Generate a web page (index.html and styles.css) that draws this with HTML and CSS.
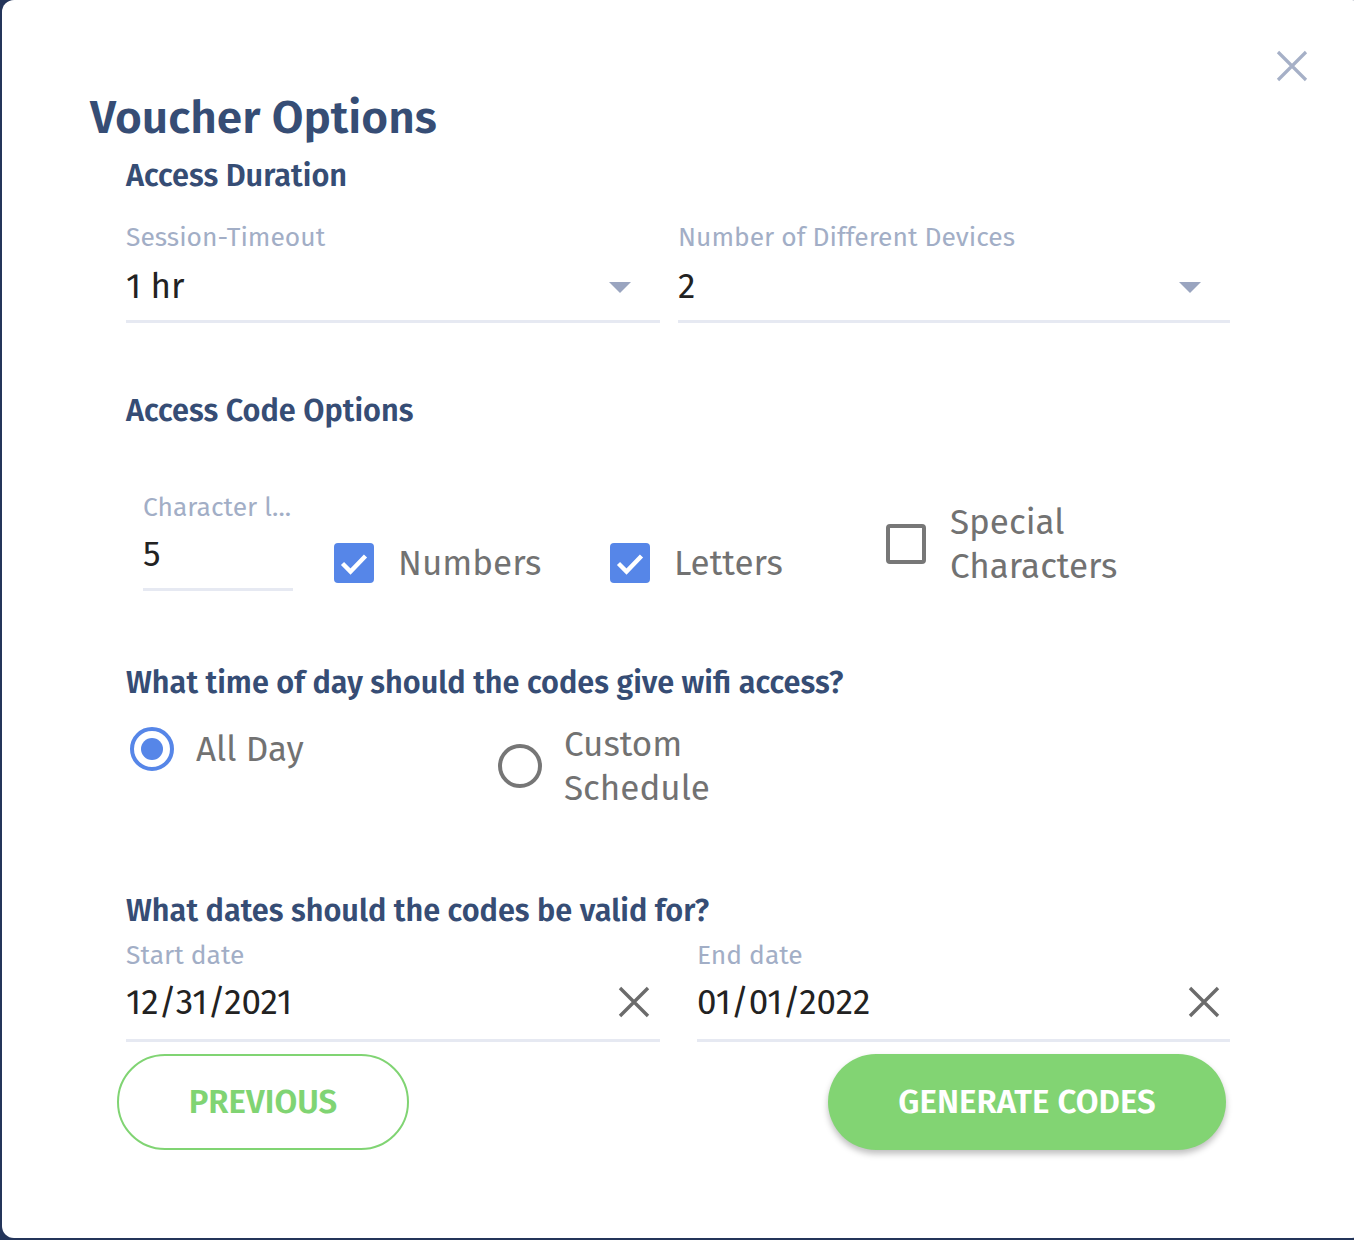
FILE: index.html
```html
<!DOCTYPE html>
<html>
<head>
<meta charset="utf-8">
<link rel="stylesheet" href="styles.css">
</head>
<body>
<div class="modal">
  <button class="close" aria-label="Close">
    <svg width="32" height="32" viewBox="0 0 32 32"><path d="M2 2 L30 30 M30 2 L2 30" stroke="#a6b0c7" stroke-width="3.2" fill="none"/></svg>
  </button>
  <h1 class="title">Voucher Options</h1>
  <div class="content">
    <h2 class="heading h-duration">Access Duration</h2>
    <div class="row-duration">
      <div class="field">
        <div class="label">Session-Timeout</div>
        <div class="value-row">
          <span class="value">1 hr</span>
          <span class="caret"></span>
        </div>
      </div>
      <div class="field">
        <div class="label">Number of Different Devices</div>
        <div class="value-row">
          <span class="value">2</span>
          <span class="caret"></span>
        </div>
      </div>
    </div>

    <h2 class="heading h-code">Access Code Options</h2>
    <div class="row-code">
      <div class="field field-len">
        <div class="label">Character l...</div>
        <div class="value-row">
          <span class="value">5</span>
        </div>
      </div>
      <div class="check check-numbers">
        <span class="box checked"><svg viewBox="0 0 40 40" width="40" height="40"><path d="M8.5 20.5 L16.5 28.5 L31.5 13" stroke="#fff" stroke-width="4.4" fill="none"/></svg></span>
        <span class="check-label">Numbers</span>
      </div>
      <div class="check check-letters">
        <span class="box checked"><svg viewBox="0 0 40 40" width="40" height="40"><path d="M8.5 20.5 L16.5 28.5 L31.5 13" stroke="#fff" stroke-width="4.4" fill="none"/></svg></span>
        <span class="check-label">Letters</span>
      </div>
      <div class="check check-special">
        <span class="box"></span>
        <span class="check-label">Special<br>Characters</span>
      </div>
    </div>

    <h2 class="heading h-time">What time of day should the codes give wifi access?</h2>
    <div class="row-radio">
      <div class="radio radio-all">
        <span class="circle on"><span class="dot"></span></span>
        <span class="radio-label">All Day</span>
      </div>
      <div class="radio radio-custom">
        <span class="circle"></span>
        <span class="radio-label">Custom<br>Schedule</span>
      </div>
    </div>

    <h2 class="heading h-dates">What dates should the codes be valid for?</h2>
    <div class="row-dates">
      <div class="field">
        <div class="label">Start date</div>
        <div class="value-row">
          <span class="value">12/31/2021</span>
          <svg class="clear" width="32" height="32" viewBox="0 0 32 32"><path d="M2 2 L30 30 M30 2 L2 30" stroke="#6b6b6b" stroke-width="3.4" fill="none"/></svg>
        </div>
      </div>
      <div class="field">
        <div class="label">End date</div>
        <div class="value-row">
          <span class="value">01/01/2022</span>
          <svg class="clear" width="32" height="32" viewBox="0 0 32 32"><path d="M2 2 L30 30 M30 2 L2 30" stroke="#6b6b6b" stroke-width="3.4" fill="none"/></svg>
        </div>
      </div>
    </div>

    <div class="actions">
      <button class="btn btn-outline">PREVIOUS</button>
      <button class="btn btn-fill">GENERATE CODES</button>
    </div>
  </div>
</div>
</body>
</html>
```

FILE: styles.css
```css
html, body {
  margin: 0;
  padding: 0;
}
body {
  background: #24355a;
  width: 1354px;
  height: 1240px;
  overflow: hidden;
  font-family: "Fira Sans", "Open Sans", "Noto Sans", sans-serif;
}
.modal {
  position: relative;
  box-sizing: border-box;
  margin-left: 2px;
  width: 1362px;
  height: 1238px;
  background: #fff;
  border-radius: 12px;
  padding: 90px 0 0 88px;
}
.close {
  position: absolute;
  top: 50px;
  left: 1274px;
  background: none;
  border: 0;
  padding: 0;
  width: 32px;
  height: 32px;
}
.close svg { display: block; }
.title {
  margin: 0;
  font-size: 46px;
  font-weight: 600;
  color: #364d75;
  line-height: 56px;
}
.content {
  padding-left: 36px;
  width: 1104px;
}
.heading {
  margin: 0;
  font-size: 30.7px;
  font-weight: 600;
  color: #364d75;
  line-height: 36px;
}
.h-duration { margin-top: 12px; }
.label {
  font-size: 26.4px;
  color: #a2aec6;
  line-height: 30px;
}
.value-row {
  display: flex;
  align-items: center;
  justify-content: space-between;
  border-bottom: 3px solid #e6e9f2;
  height: 44px;
  padding-top: 12px;
  padding-bottom: 12px;
}
.value {
  font-size: 35px;
  line-height: 44px;
  color: #222;
}
.caret {
  width: 0;
  height: 0;
  border-left: 11px solid transparent;
  border-right: 11px solid transparent;
  border-top: 11px solid #9aa5c0;
  margin-right: 29px;
  margin-top: 2px;
}
.row-duration {
  display: grid;
  grid-template-columns: 534px 552px;
  column-gap: 18px;
  margin-top: 28px;
}
.h-code { margin-top: 70px; }
.row-code {
  display: flex;
  align-items: flex-start;
  margin-top: 63px;
  padding-left: 17px;
}
.field-len { width: 150px; }
.field-len .value-row { padding-top: 10px; }
.check {
  display: flex;
  align-items: center;
}
.check-numbers { margin-left: 41px; width: 276px; margin-top: 49px; }
.check-letters { width: 276px; margin-top: 49px; }
.check-special { margin-top: 8px; }
.box {
  width: 40px;
  height: 40px;
  box-sizing: border-box;
  border-radius: 4px;
  border: 4px solid #777;
  flex: none;
  display: block;
}
.box.checked {
  border: 0;
  background: #5686e8;
}
.box svg { display: block; }
.check-label {
  margin-left: 24px;
  font-size: 35px;
  color: #727272;
  line-height: 44px;
}
.h-time { margin-top: 74px; }
.row-radio {
  display: flex;
  align-items: flex-start;
  margin-top: 21px;
  padding-left: 4px;
}
.radio {
  display: flex;
  align-items: center;
}
.radio-all { width: 368px; margin-top: 5px; }
.circle {
  width: 44px;
  height: 44px;
  box-sizing: border-box;
  border-radius: 50%;
  border: 4px solid #767676;
  display: flex;
  align-items: center;
  justify-content: center;
  flex: none;
}
.circle.on { border-color: #5686e8; }
.dot {
  width: 22px;
  height: 22px;
  border-radius: 50%;
  background: #5686e8;
}
.radio-label {
  margin-left: 22px;
  font-size: 35px;
  color: #727272;
  line-height: 44px;
}
.h-dates { margin-top: 83px; }
.row-dates {
  display: grid;
  grid-template-columns: 534px 533px;
  column-gap: 37px;
  margin-top: 11px;
}
.row-dates .value-row { padding-top: 10px; padding-bottom: 15px; }
.clear { margin-right: 10px; }
.actions {
  display: flex;
  justify-content: space-between;
  width: 1109px;
  margin-top: 12px;
  margin-left: -9px;
}
.btn {
  height: 96px;
  border-radius: 48px;
  font-family: inherit;
  font-size: 33px;
  font-weight: 600;
  cursor: pointer;
}
.btn-outline {
  width: 292px;
  background: #fff;
  border: 2px solid #80d473;
  color: #80d473;
}
.btn-fill {
  width: 398px;
  border: 0;
  background: #82d473;
  color: #fff;
  box-shadow: 0 4px 6px rgba(0,0,0,0.25);
}
```
